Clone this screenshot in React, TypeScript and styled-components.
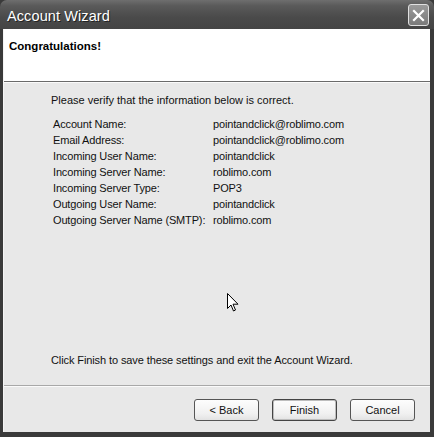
import React from "react";
import styled, { createGlobalStyle } from "styled-components";

const Global = createGlobalStyle`
  html, body { margin: 0; padding: 0; background: #fff; }
  body { font-family: "Liberation Sans", Arial, sans-serif; }
`;

const Window = styled.div`
  position: relative;
  width: 434px;
  height: 437px;
  display: flex;
  flex-direction: column;
  background: #3a3a3a;
  box-sizing: border-box;
  overflow: hidden;
`;

const TitleBar = styled.div`
  height: 29px;
  flex: none;
  display: flex;
  align-items: center;
  justify-content: space-between;
  padding: 0 5px 0 7px;
  border-radius: 7px 7px 0 0;
  background: linear-gradient(#6e6e6e 0%, #5a5a5a 20%, #4a4a4a 60%, #444 100%);
`;

const Title = styled.span`
  color: #fff;
  font-size: 14.5px;
  letter-spacing: 0.1px;
  text-shadow: 1px 1px 0 #222;
  padding-top: 2px;
`;

const CloseBtn = styled.div`
  width: 19px;
  height: 20px;
  border: 1px solid #e0e0e0;
  border-radius: 3px;
  background: linear-gradient(#9a9a9a, #7a7a7a);
  display: flex;
  align-items: center;
  justify-content: center;
  margin-top: 1px;
`;

const Frame = styled.div`
  flex: 1;
  display: flex;
  flex-direction: column;
  margin: 0 4px 5px 3px;
  background: #e8e8e8;
  border-left: 1px solid #f4f4f4;
`;

const Header = styled.div`
  height: 53px;
  flex: none;
  background: #fff;
  border-bottom: 1px solid #6a6a6a;
  box-shadow: 0 1px 0 #fafafa;
  padding: 11px 0 0 5px;
  box-sizing: border-box;
`;

const HeaderTitle = styled.div`
  font-weight: bold;
  font-size: 11.5px;
  color: #000;
`;

const Body = styled.div`
  flex: 1;
  display: flex;
  flex-direction: column;
  padding: 12px 0 0 47px;
  font-size: 11px;
  color: #111;
`;

const Intro = styled.div`
  margin-bottom: 10px;
`;

const Table = styled.div`
  display: grid;
  grid-template-columns: 160px auto;
  grid-auto-rows: 16px;
  padding-left: 2px;
  align-items: center;
  letter-spacing: -0.15px;
`;

const Spacer = styled.div`
  flex: 1;
`;

const Outro = styled.div`
  margin-bottom: 19px;
  letter-spacing: -0.1px;
`;

const Footer = styled.div`
  height: 47px;
  flex: none;
  border-top: 1px solid #a8a8a8;
  box-shadow: inset 0 1px 0 #fafafa;
  display: flex;
  justify-content: flex-end;
  align-items: flex-start;
  gap: 13px;
  padding: 13px 15px 0 0;
  box-sizing: border-box;
`;

const Button = styled.button<{ $focus?: boolean }>`
  width: 65px;
  height: 22px;
  font-family: "Liberation Sans", Arial, sans-serif;
  font-size: 11px;
  color: #111;
  background: linear-gradient(#fdfdfd, #f0f0f0 70%, #e2e2e2);
  border: 1px solid ${(p) => (p.$focus ? "#444" : "#555")};
  border-radius: 3px;
  box-shadow: ${(p) => (p.$focus ? "inset 0 0 0 1px #bdbdbd" : "none")};
  padding: 0;
`;

const Cursor = styled.svg`
  position: absolute;
  left: 227px;
  top: 293px;
`;

const rows: [string, string][] = [
  ["Account Name:", "pointandclick@roblimo.com"],
  ["Email Address:", "pointandclick@roblimo.com"],
  ["Incoming User Name:", "pointandclick"],
  ["Incoming Server Name:", "roblimo.com"],
  ["Incoming Server Type:", "POP3"],
  ["Outgoing User Name:", "pointandclick"],
  ["Outgoing Server Name (SMTP):", "roblimo.com"],
];

export default function App() {
  return (
    <>
      <Global />
      <Window>
        <TitleBar>
          <Title>Account Wizard</Title>
          <CloseBtn>
            <svg width="13" height="13" viewBox="0 0 13 13">
              <path d="M2 2 L11 11 M11 2 L2 11" stroke="#fff" strokeWidth="2.2" strokeLinecap="square" />
            </svg>
          </CloseBtn>
        </TitleBar>
        <Frame>
          <Header>
            <HeaderTitle>Congratulations!</HeaderTitle>
          </Header>
          <Body>
            <Intro>Please verify that the information below is correct.</Intro>
            <Table>
              {rows.map(([k, v]) => (
                <React.Fragment key={k}>
                  <span>{k}</span>
                  <span>{v}</span>
                </React.Fragment>
              ))}
            </Table>
            <Spacer />
            <Outro>Click Finish to save these settings and exit the Account Wizard.</Outro>
          </Body>
          <Footer>
            <Button>&lt; Back</Button>
            <Button $focus>Finish</Button>
            <Button>Cancel</Button>
          </Footer>
        </Frame>
        <Cursor width="12" height="20" viewBox="0 0 12 20">
          <path d="M0.5 0.5 L0.5 15.5 L4 12 L6.5 18 L8.5 17 L6 11.2 L11 11.2 Z" fill="#fff" stroke="#000" strokeWidth="1" strokeLinejoin="miter" />
        </Cursor>
      </Window>
    </>
  );
}
